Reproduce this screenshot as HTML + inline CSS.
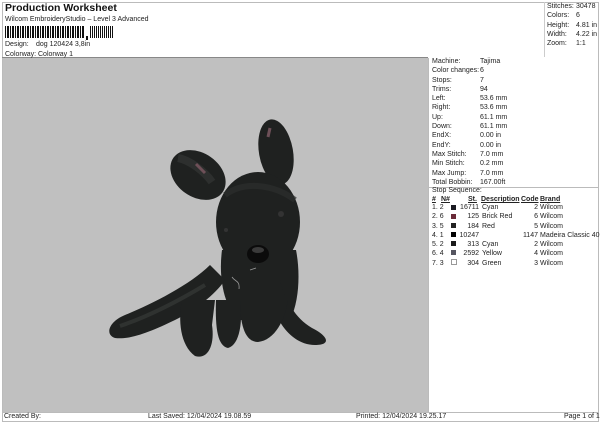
<!DOCTYPE html>
<html><head><meta charset="utf-8"><style>
body{margin:0;width:600px;height:424px;background:#fff;font-family:"Liberation Sans",sans-serif;color:#222;position:relative;overflow:hidden}
div,span{position:absolute;white-space:nowrap}
.s{font-size:7px}
.r{font-size:7px;line-height:9.3px}
</style></head><body>
<div style="left:2px;top:2px;width:595px;height:418px;border:1px solid #bbb"></div>
<div style="left:2px;top:57px;width:426px;height:1px;background:#888"></div>
<div style="left:544px;top:2px;width:1px;height:55px;background:#ccc"></div>
<div style="left:5px;top:2px;font-size:10.5px;font-weight:bold;color:#111">Production Worksheet</div>
<div class="s" style="left:5px;top:16px">Wilcom EmbroideryStudio – Level 3 Advanced</div>
<div style="left:5px;top:26px;width:80px;height:12px;background:repeating-linear-gradient(90deg,#111 0 1px,#fff 1px 2px,#111 2px 4px,#fff 4px 5px)"></div>
<div style="left:86px;top:36px;width:2px;height:4px;background:#111"></div>
<div style="left:90px;top:26px;width:24px;height:12px;background:repeating-linear-gradient(90deg,#111 0 1px,#fff 1px 2px,#111 2px 3px,#fff 3px 4px)"></div>
<div class="s" style="left:5px;top:41px">Design:</div><div class="s" style="left:36px;top:41px">dog 120424 3,8in</div>
<div class="s" style="left:5px;top:51px">Colorway:</div><div class="s" style="left:38px;top:51px">Colorway 1</div>
<div class="r" style="left:547px;top:2px">Stitches:<br>Colors:<br>Height:<br>Width:<br>Zoom:</div>
<div class="r" style="left:576px;top:2px">30478<br>6<br>4.81 in<br>4.22 in<br>1:1</div>
<div style="left:3px;top:58px;width:425px;height:355px;background:#c0c0c0"></div>
<svg style="position:absolute;left:0;top:0" width="600" height="424">
<g fill="#1f2120">
<ellipse cx="198" cy="175" rx="30" ry="22" transform="rotate(35 198 175)"/>
<ellipse cx="276" cy="152" rx="17" ry="33" transform="rotate(-10 276 152)"/>
<ellipse cx="258" cy="222" rx="42" ry="50"/>
<path d="M222,250 C218,280 225,310 240,320 L290,320 C300,300 300,270 296,250 Z"/>
<path d="M210,265 C190,285 150,305 125,315 C108,322 105,335 115,338 C130,340 150,332 175,320 C195,310 215,295 225,280 Z"/>
<path d="M182,300 C178,320 180,345 195,356 C208,360 215,345 212,325 L215,300 Z"/>
<path d="M216,300 L240,300 C243,320 240,345 228,348 C218,346 215,330 216,300 Z"/>
<path d="M280,280 C285,300 295,318 312,328 C328,336 332,345 315,345 C300,345 288,335 280,322 Z"/>
<path d="M240,300 C255,300 275,300 288,300 C285,320 275,340 258,342 C245,342 240,325 240,300 Z"/>
</g>
<path d="M178,158 C190,160 205,172 212,182" stroke="#333635" stroke-width="8" fill="none" opacity=".7"/>
<path d="M196,164 l9,9" stroke="#6e5058" stroke-width="3"/>
<path d="M270,128 l-2,9" stroke="#6e5058" stroke-width="3"/>
<ellipse cx="258" cy="254" rx="11" ry="9" fill="#0b0b0b"/>
<ellipse cx="258" cy="250" rx="6" ry="3" fill="#3a3a3a"/>
<circle cx="281" cy="214" r="3" fill="#333"/><circle cx="226" cy="230" r="2" fill="#333"/>
<path d="M232,277 c3,5 8,3 7,12 M250,270 l6,-2" stroke="#999" stroke-width="0.8" fill="none"/>
<path d="M225,195 C245,180 275,185 295,200" stroke="#2c2f2e" stroke-width="6" fill="none" opacity=".7"/>
<path d="M120,326 C150,316 180,300 205,285" stroke="#3a3d3c" stroke-width="4" fill="none" opacity=".6"/>
</svg>
<div style="left:428px;top:58px;width:1px;height:355px;background:#bbb"></div>
<div class="r" style="left:432px;top:57px">Machine:<br>Color changes:<br>Stops:<br>Trims:<br>Left:<br>Right:<br>Up:<br>Down:<br>EndX:<br>EndY:<br>Max Stitch:<br>Min Stitch:<br>Max Jump:<br>Total Bobbin:</div>
<div class="r" style="left:480px;top:57px">Tajima<br>6<br>7<br>94<br>53.6 mm<br>53.6 mm<br>61.1 mm<br>61.1 mm<br>0.00 in<br>0.00 in<br>7.0 mm<br>0.2 mm<br>7.0 mm<br>167.00ft</div>
<div style="left:429px;top:187px;width:169px;height:1px;background:#bbb"></div>
<div class="s" style="left:432px;top:187px">Stop Sequence:</div>
<div class="s" style="left:432px;top:196px;text-decoration:underline;font-weight:bold">#</div>
<div class="s" style="left:441px;top:196px;text-decoration:underline;font-weight:bold">N#</div>
<div class="s" style="left:468px;top:196px;text-decoration:underline;font-weight:bold">St.</div>
<div class="s" style="left:481px;top:196px;text-decoration:underline;font-weight:bold">Description</div>
<div class="s" style="left:521px;top:196px;text-decoration:underline;font-weight:bold">Code</div>
<div class="s" style="left:540px;top:196px;text-decoration:underline;font-weight:bold">Brand</div>
<div class="r" style="left:432px;top:203px">1. 2<br>2. 6<br>3. 5<br>4. 1<br>5. 2<br>6. 4<br>7. 3</div>
<div style="left:451px;top:205px;width:5px;height:5px;background:#1a1a22"></div>
<div style="left:451px;top:214px;width:5px;height:5px;background:#6a2a38"></div>
<div style="left:451px;top:223px;width:5px;height:5px;background:#222"></div>
<div style="left:451px;top:232px;width:5px;height:5px;background:#000"></div>
<div style="left:451px;top:241px;width:5px;height:5px;background:#1a1a1a"></div>
<div style="left:451px;top:250px;width:5px;height:5px;background:#555560"></div>
<div style="left:451px;top:259px;width:4px;height:4px;border:1px solid #999;background:#fff"></div>
<div class="r" style="left:459px;top:203px;width:20px;text-align:right">16711<br>125<br>184<br>10247<br>313<br>2592<br>304</div>
<div class="r" style="left:482px;top:203px">Cyan<br>Brick Red<br>Red<br><br>Cyan<br>Yellow<br>Green</div>
<div class="r" style="left:515px;top:203px;width:23px;text-align:right">2<br>6<br>5<br>1147<br>2<br>4<br>3</div>
<div class="r" style="left:540px;top:203px">Wilcom<br>Wilcom<br>Wilcom<br>Madeira Classic 40<br>Wilcom<br>Wilcom<br>Wilcom</div>
<div style="left:2px;top:412px;width:596px;height:1px;background:#bbb"></div>
<div class="s" style="left:4px;top:413px">Created By:</div>
<div class="s" style="left:148px;top:413px">Last Saved: 12/04/2024 19.08.59</div>
<div class="s" style="left:356px;top:413px">Printed: 12/04/2024 19.25.17</div>
<div class="s" style="left:564px;top:413px">Page 1 of 1</div>
</body></html>
